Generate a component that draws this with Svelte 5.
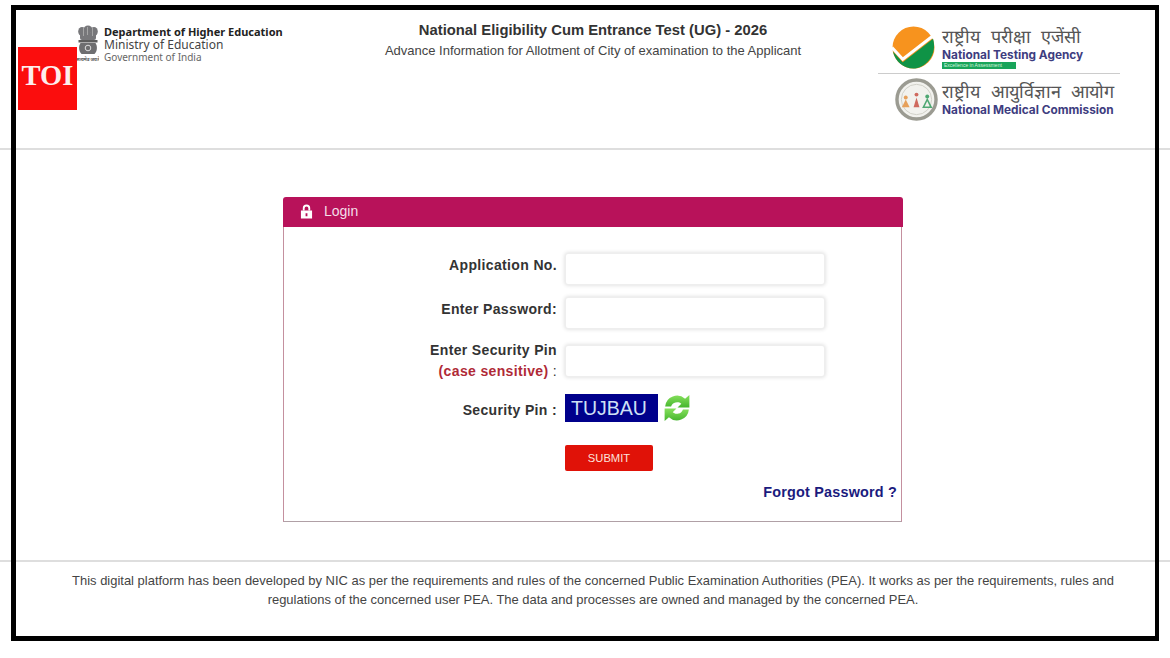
<script>
  let applicationNo = '';
  let password = '';
  let securityPin = '';
</script>

<div class="page">
  <!-- Header -->
  <header class="top-bar">
    <div class="ministry">
      <svg class="emblem" viewBox="0 0 22 38" aria-hidden="true">
        <g fill="#77777a">
          <ellipse cx="11" cy="4.500" rx="4.500" ry="4" />
          <ellipse cx="5" cy="6.500" rx="3.800" ry="4.500" />
          <ellipse cx="17" cy="6.500" rx="3.800" ry="4.500" />
          <rect x="3" y="8" width="16" height="7" rx="2" />
          <path d="M6 3h1v8H6zM10 2h1v8h-1zM15 3h1v8h-1z" fill="#a5a5a5" />
          <rect x="1.500" y="15" width="19" height="2.500" fill="#5c5c5c" />
          <path d="M3.500 18h15c2 3 2 8-1 11h-13c-3-3-3-8-1-11z" fill="#6e6e70" />
        </g>
        <circle cx="11" cy="23" r="2.800" fill="none" stroke="#ddd" stroke-width="1" />
        <text x="11" y="35.500" text-anchor="middle" font-size="4.500" font-weight="700" fill="#555">सत्यमेव जयते</text>
      </svg>
      <div class="ministry-text">
        <span class="dept">Department of Higher Education</span>
        <span class="moe">Ministry of Education</span>
        <span class="goi">Government of India</span>
      </div>
    </div>

    <div class="exam-title">
      <h1>National Eligibility Cum Entrance Test (UG) - 2026</h1>
      <p>Advance Information for Allotment of City of examination to the Applicant</p>
    </div>

    <div class="agencies">
      <div class="agency nta">
        <svg class="agency-logo" viewBox="0 0 44 44" aria-hidden="true">
          <circle cx="22" cy="22" r="21.500" fill="#f7931e" />
          <path d="M1 26 L11 37 L42 13 C44 20 43.500 28 38 35 C33 41 27 43.500 22 43.500 C12 43.500 3 36 1 26z" fill="#0f9346" />
          <path d="M0 22 L11 34 L42 10" fill="none" stroke="#fff" stroke-width="3" />
        </svg>
        <div class="agency-text">
          <span class="hindi">राष्ट्रीय परीक्षा एजेंसी</span>
          <span class="english">National Testing Agency</span>
          <span class="tagline">Excellence in Assessment</span>
        </div>
      </div>
      <div class="agency nmc">
        <svg class="agency-logo" viewBox="0 0 44 44" aria-hidden="true">
          <circle cx="22" cy="22" r="20" fill="#f2f2ee" stroke="#9b9b92" stroke-width="3.500" />
          <circle cx="22" cy="22" r="15.500" fill="none" stroke="#d0d0c8" stroke-width="1" />
          <circle cx="11" cy="20" r="2" fill="#e6a05a" />
          <path d="M7 30l4-8 4 8z" fill="#e6a05a" />
          <circle cx="22" cy="17" r="2" fill="#cf6a5f" />
          <path d="M19 30l3-10 3 10z" fill="#cf6a5f" />
          <circle cx="33" cy="19" r="2" fill="#4fa873" />
          <path d="M29 30l4-8 4 8z" fill="none" stroke="#4fa873" stroke-width="1.600" />
        </svg>
        <div class="agency-text">
          <span class="hindi">राष्ट्रीय आयुर्विज्ञान आयोग</span>
          <span class="english">National Medical Commission</span>
        </div>
      </div>
    </div>
  </header>

  <!-- Login -->
  <main class="content">
    <section class="login-card">
      <div class="card-head">
        <svg class="lock" viewBox="0 0 14 16" aria-hidden="true">
          <path d="M3 7V4.500a4 4 0 0 1 8 0V7H9V4.500a2 2 0 0 0-4 0V7z" fill="#fff" />
          <path d="M1 7h12v8.500H1zM6 10v3h2v-3z" fill="#fff" fill-rule="evenodd" />
        </svg>
        <span>Login</span>
      </div>
      <form class="card-body" on:submit|preventDefault>
        <div class="row row-app">
          <label for="app-no">Application No.</label>
          <input id="app-no" bind:value={applicationNo} />
        </div>
        <div class="row row-pass">
          <label for="pass">Enter Password:</label>
          <input id="pass" type="password" bind:value={password} />
        </div>
        <div class="row row-pin">
          <label for="pin">Enter Security Pin<br /><span class="sensitive">(case sensitive)</span> <span class="colon">:</span></label>
          <input id="pin" bind:value={securityPin} />
        </div>
        <div class="row row-captcha">
          <span class="label">Security Pin :</span>
          <div class="captcha">TUJBAU</div>
          <svg class="refresh" viewBox="2 2 26 26" aria-hidden="true">
            <defs>
              <linearGradient id="refresh-green" x1="0" y1="0" x2="0" y2="1">
                <stop offset="0" stop-color="#86e05c" />
                <stop offset="1" stop-color="#45b52e" />
              </linearGradient>
            </defs>
            <path d="M4 13.500A11 11 0 0 1 22.500 6.500L26.500 3V14.500H15.500l3.500-3.500A6 6 0 0 0 9.500 13.500z" fill="url(#refresh-green)" />
            <path d="M26 16.500A11 11 0 0 1 7.500 23.500L3.500 27V15.500H14.500L11 19A6 6 0 0 0 20.500 16.500z" fill="url(#refresh-green)" />
          </svg>
        </div>
        <div class="row row-submit">
          <span class="label"></span>
          <button type="submit">SUBMIT</button>
        </div>
        <a class="forgot" href="#forgot">Forgot Password ?</a>
      </form>
    </section>
  </main>

  <!-- Footer -->
  <footer class="bottom-bar">
    <p>This digital platform has been developed by NIC as per the requirements and rules of the concerned Public Examination Authorities (PEA). It works as per the requirements, rules and regulations of the concerned user PEA. The data and processes are owned and managed by the concerned PEA.</p>
  </footer>

  <!-- Overlays on the screenshot -->
  <div class="toi">TOI</div>
  <div class="frame"></div>
</div>

<style>
  :global(body) {
    margin: 0;
    background: #fff;
  }

  .page {
    position: relative;
    width: 1170px;
    height: 658px;
    overflow: hidden;
    font-family: "Liberation Sans", Arial, sans-serif;
    color: #333;
    background: #fff;
  }

  .top-bar {
    display: flex;
    box-sizing: border-box;
    height: 150px;
    border-bottom: 2px solid #dedede;
  }

  .ministry {
    display: flex;
    gap: 5px;
    width: 300px;
    box-sizing: border-box;
    padding: 25px 0 0 77px;
  }

  .emblem {
    width: 22px;
    height: 38px;
    font-family: "Noto Sans", sans-serif;
  }

  .ministry-text {
    display: flex;
    flex-direction: column;
    font-family: "Noto Sans", sans-serif;
    color: #444;
  }

  .dept {
    font-size: 11px;
    font-weight: 700;
    line-height: 13px;
    color: #222;
  }

  .moe {
    font-size: 12px;
    line-height: 13px;
  }

  .goi {
    font-size: 10px;
    line-height: 12px;
    color: #666;
  }

  .exam-title {
    box-sizing: border-box;
    width: 578px;
    padding: 21px 0 0 8px;
    text-align: center;
  }

  .exam-title h1 {
    margin: 0;
    font-size: 14.800px;
    line-height: 18px;
    font-weight: 700;
  }

  .exam-title p {
    margin: 4px 0 0;
    font-size: 13px;
    line-height: 15px;
    color: #444;
  }

  .agencies {
    width: 242px;
    margin-top: 22px;
    height: 100px;
  }

  .agency {
    display: flex;
    align-items: flex-start;
  }

  .nta {
    height: 51px;
    padding-left: 14px;
    gap: 7px;
    border-bottom: 1px solid #ccc;
  }

  .nta .agency-text {
    padding-top: 5px;
  }

  .nta .tagline {
    margin-top: -1px;
  }

  .nmc {
    padding: 4px 0 0 17px;
    gap: 4px;
  }

  .nmc .agency-logo {
    margin-top: 0;
  }

  .nmc .agency-text {
    padding-top: 4px;
  }

  .agency-logo {
    width: 43px;
    height: 43px;
    margin-top: 4px;
  }

  .agency-text {
    display: flex;
    flex-direction: column;
    align-items: flex-start;
  }

  .hindi {
    font-size: 18px;
    line-height: 21px;
    word-spacing: 5.500px;
    color: #555;
    white-space: nowrap;
  }

  .english {
    font-family: "Inter", sans-serif;
    font-size: 11.850px;
    font-weight: 700;
    line-height: 15px;
    color: #3e3d80;
    white-space: nowrap;
  }

  .tagline {
    font-size: 5px;
    line-height: 7px;
    padding: 0 2px;
    width: 70px;
    color: #d7f5df;
    background: #19a45a;
    white-space: nowrap;
  }

  .content {
    height: 410px;
    box-sizing: border-box;
    padding: 47px 0 0 283px;
  }

  .login-card {
    width: 620px;
  }

  .card-head {
    display: flex;
    align-items: center;
    gap: 11px;
    height: 30px;
    padding: 0 0 2px 17px;
    box-sizing: border-box;
    font-size: 14px;
    color: #f3dfe8;
    background: #b8125a;
    border-radius: 3px 3px 0 0;
  }

  .lock {
    width: 13px;
    height: 15px;
  }

  .card-body {
    display: flex;
    flex-direction: column;
    box-sizing: border-box;
    width: 619px;
    height: 295px;
    border: 1px solid #c4909f;
    border-top: 0;
    border-bottom-color: #b0a0a6;
  }

  .row {
    display: flex;
    align-items: center;
    gap: 8px;
  }

  .row label,
  .label {
    width: 273px;
    text-align: right;
    font-size: 14px;
    font-weight: 700;
    line-height: 21px;
    letter-spacing: 0.350px;
    color: #333;
  }

  .row input {
    box-sizing: border-box;
    width: 260px;
    height: 32px;
    padding: 0 8px;
    border: 1px solid #eee;
    border-radius: 3px;
    box-shadow: 0 0 4px rgba(0, 0, 0, 0.16);
    background: #fff;
  }

  .row-app {
    margin-top: 26px;
  }

  .row-app label {
    margin-top: -7px;
  }

  .row-pass {
    margin-top: 12px;
  }

  .row-pass label {
    margin-top: -8px;
  }

  .row-pin {
    margin-top: 11px;
  }

  .sensitive {
    color: #b02a37;
  }

  .colon {
    font-weight: 400;
  }

  .row-captcha {
    margin-top: 12px;
  }

  .row-captcha .label {
    margin-top: 4px;
  }

  .captcha {
    box-sizing: border-box;
    width: 93px;
    height: 28px;
    padding-left: 6px;
    font-size: 19.500px;
    line-height: 28px;
    color: #cfe0f5;
    background: #00008b;
  }

  .refresh {
    width: 28px;
    height: 28px;
    margin-left: -3px;
  }

  .row-submit {
    margin-top: 23px;
  }

  .row-submit button {
    width: 88px;
    height: 26px;
    padding: 0;
    border: 0;
    border-radius: 2px;
    font-family: inherit;
    font-size: 11.200px;
    color: #fbe3dd;
    background: #e01208;
  }

  .forgot {
    align-self: flex-end;
    margin: 12px 4px 0 0;
    font-size: 14.400px;
    font-weight: 700;
    line-height: 18px;
    letter-spacing: 0.200px;
    color: #1b1b7e;
    text-decoration: none;
  }

  .bottom-bar {
    box-sizing: border-box;
    height: 98px;
    padding: 9px 52px 0 68px;
    border-top: 2px solid #dedede;
  }

  .bottom-bar p {
    margin: 0;
    font-size: 12.960px;
    line-height: 19px;
    text-align: center;
    color: #444;
  }

  .toi {
    position: absolute;
    left: 18px;
    top: 47px;
    width: 59px;
    height: 63px;
    font-family: "Liberation Serif", serif;
    font-size: 28.500px;
    font-weight: 700;
    line-height: 58px;
    text-align: center;
    color: #fdeeee;
    background: #fb0d0d;
  }

  .frame {
    position: absolute;
    left: 11px;
    top: 5px;
    width: 1148px;
    height: 636px;
    box-sizing: border-box;
    border: 5px solid #000;
    border-right-width: 4px;
    pointer-events: none;
  }
</style>
